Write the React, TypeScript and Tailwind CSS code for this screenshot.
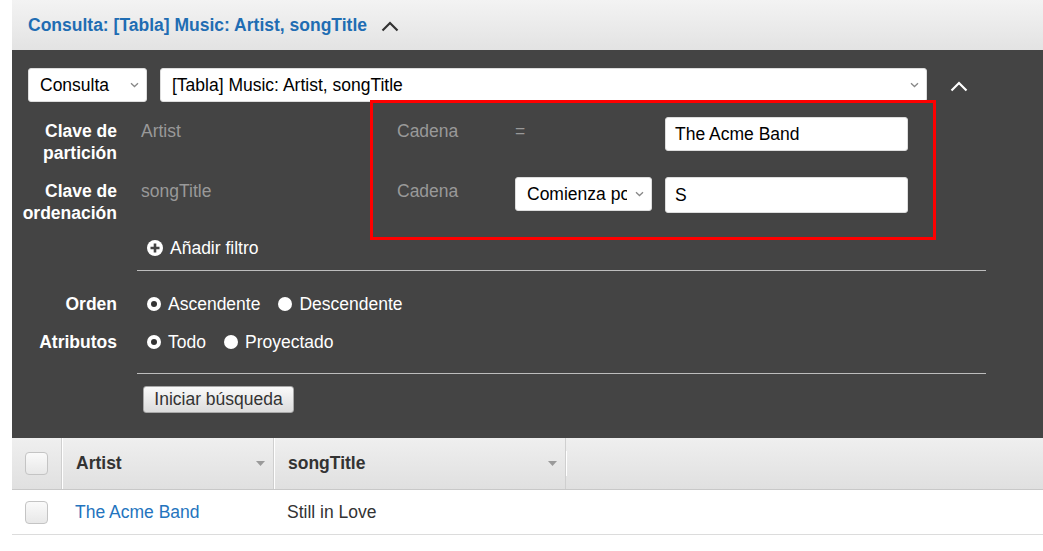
import React from "react"

const FONT = "font-['Liberation_Sans',Arial,sans-serif]"

function ChevronDown() {
  return (
    <svg width="9" height="6" viewBox="0 0 9 6" className="shrink-0">
      <path d="M1 1.2 L4.5 4.5 L8 1.2" fill="none" stroke="#888" strokeWidth="1.3" />
    </svg>
  )
}

function ChevronUp({ color }: { color: string }) {
  return (
    <svg width="18" height="11" viewBox="0 0 18 11">
      <path d="M1.5 9.5 L9 2 L16.5 9.5" fill="none" stroke={color} strokeWidth="2.2" />
    </svg>
  )
}

function Select({ label, className }: { label: string; className: string }) {
  return (
    <div
      className={`flex items-center gap-[8px] bg-white rounded-[3px] border border-[#ddd] pl-[11px] pr-[7px] text-black overflow-hidden ${className}`}
    >
      <span className="flex-1 whitespace-nowrap overflow-hidden">{label}</span>
      <ChevronDown />
    </div>
  )
}

function Radio({ checked, label }: { checked?: boolean; label: string }) {
  return (
    <div className="flex items-center gap-[7px]">
      <span className="w-[14px] h-[14px] rounded-full bg-white flex items-center justify-center">
        {checked && <span className="w-[6px] h-[6px] rounded-full bg-[#333]" />}
      </span>
      <span className="text-white leading-[22px]">{label}</span>
    </div>
  )
}

function Checkbox() {
  return (
    <div className="w-[23px] h-[23px] rounded-[4px] border border-[#c4c4c4] bg-gradient-to-b from-[#fafafa] to-[#e8e8e8]" />
  )
}

function SortArrow() {
  return (
    <svg width="9" height="5" viewBox="0 0 9 5">
      <path d="M0 0 L9 0 L4.5 5 Z" fill="#9a9a9a" />
    </svg>
  )
}

export default function App() {
  return (
    <div className={`w-[1043px] h-[551px] bg-white pl-3 overflow-hidden text-[17.5px] ${FONT}`}>
      {/* Section header */}
      <div className="h-[50px] bg-gradient-to-b from-[#f3f3f3] to-[#e3e3e3] flex items-center pl-4 gap-[14px]">
        <span className="font-bold text-[#1f6db3]">Consulta: [Tabla] Music: Artist, songTitle</span>
        <span className="mt-[3px]">
          <ChevronUp color="#333" />
        </span>
      </div>

      {/* Query panel */}
      <div className="relative h-[388px] bg-[#444] pt-[18px]">
        <div className="flex items-center pl-4">
          <Select label="Consulta" className="w-[119px] h-[34px]" />
          <Select label="[Tabla] Music: Artist, songTitle" className="ml-[13px] w-[767px] h-[34px]" />
          <span className="ml-[23px] mt-[2px]">
            <ChevronUp color="#fff" />
          </span>
        </div>

        {/* Key rows */}
        <div className="mt-[15px] flex items-start h-[60px]">
          <div className="w-[105px] text-right font-bold text-white leading-[22px] mt-[3px]">
            Clave de
            <br />
            partición
          </div>
          <div className="ml-6 w-[256px] text-[#999] leading-[22px] mt-[3px]">Artist</div>
          <div className="w-[118px] text-[#999] leading-[22px] mt-[3px]">Cadena</div>
          <div className="w-[150px] text-[#999] leading-[22px] mt-[3px]">=</div>
          <div className="w-[243px] h-[34px] bg-white rounded-[3px] border border-[#ddd] pl-[9px] flex items-center text-black">
            The Acme Band
          </div>
        </div>
        <div className="flex items-start h-[60px]">
          <div className="w-[105px] text-right font-bold text-white leading-[22px] mt-[3px] whitespace-nowrap">
            Clave de
            <br />
            ordenación
          </div>
          <div className="ml-6 w-[256px] text-[#999] leading-[22px] mt-[3px]">songTitle</div>
          <div className="w-[118px] text-[#999] leading-[22px] mt-[3px]">Cadena</div>
          <div className="w-[150px]">
            <Select label="Comienza por" className="w-[137px] h-[34px]" />
          </div>
          <div className="w-[243px] h-[36px] bg-white rounded-[3px] border border-[#ddd] pl-[9px] flex items-center text-black">
            S
          </div>
        </div>

        <div className="flex items-center ml-[135px] h-[22px] gap-[7px]">
          <svg width="16" height="16" viewBox="0 0 16 16">
            <circle cx="8" cy="8" r="8" fill="#fff" />
            <path d="M8 3.5 V12.5 M3.5 8 H12.5" stroke="#444" strokeWidth="2.6" />
          </svg>
          <span className="text-white leading-[22px]">Añadir filtro</span>
        </div>

        <div className="mt-[11px] ml-[125px] w-[849px] h-px bg-[#bdbdbd]" />

        <div className="mt-[22px] flex items-center">
          <div className="w-[105px] text-right font-bold text-white leading-[22px]">Orden</div>
          <div className="ml-[30px] flex items-center gap-[18px]">
            <Radio checked label="Ascendente" />
            <Radio label="Descendente" />
          </div>
        </div>
        <div className="mt-[16px] flex items-center">
          <div className="w-[105px] text-right font-bold text-white leading-[22px]">Atributos</div>
          <div className="ml-[30px] flex items-center gap-[18px]">
            <Radio checked label="Todo" />
            <Radio label="Proyectado" />
          </div>
        </div>

        <div className="mt-[20px] ml-[125px] w-[849px] h-px bg-[#bdbdbd]" />

        <button className="mt-[12px] ml-[131px] w-[151px] h-[27px] rounded-[3px] border border-[#a8a8a8] bg-gradient-to-b from-[#fafafa] to-[#dcdcdc] text-[#333] leading-none flex items-center justify-center">
          Iniciar búsqueda
        </button>

        {/* Highlight annotation */}
        <div className="absolute left-[358px] top-[50px] w-[566px] h-[140px] border-[3px] border-[#ff0000] pointer-events-none" />
      </div>

      {/* Results table */}
      <div className="h-[52px] flex bg-gradient-to-b from-[#efefef] to-[#e0e0e0] border-b border-[#c8c8c8]">
        <div className="w-[50px] flex items-center pl-[13px] border-r border-[#cfcfcf]">
          <Checkbox />
        </div>
        <div className="w-[212px] flex items-center justify-between pl-[13px] pr-[8px] border-l border-white border-r border-r-[#cfcfcf]">
          <span className="font-bold text-[#333]">Artist</span>
          <SortArrow />
        </div>
        <div className="w-[292px] flex items-center justify-between pl-[13px] pr-[8px] border-l border-white border-r border-r-[#cfcfcf]">
          <span className="font-bold text-[#333]">songTitle</span>
          <SortArrow />
        </div>
        <div className="flex-1 border-l border-white my-[13px]" />
      </div>
      <div className="h-[45px] flex items-center border-b border-[#dcdcdc]">
        <div className="w-[50px] pl-[13px]">
          <Checkbox />
        </div>
        <div className="w-[212px] pl-[13px] text-[#2474be]">The Acme Band</div>
        <div className="pl-[13px] text-[#333]">Still in Love</div>
      </div>
    </div>
  )
}
